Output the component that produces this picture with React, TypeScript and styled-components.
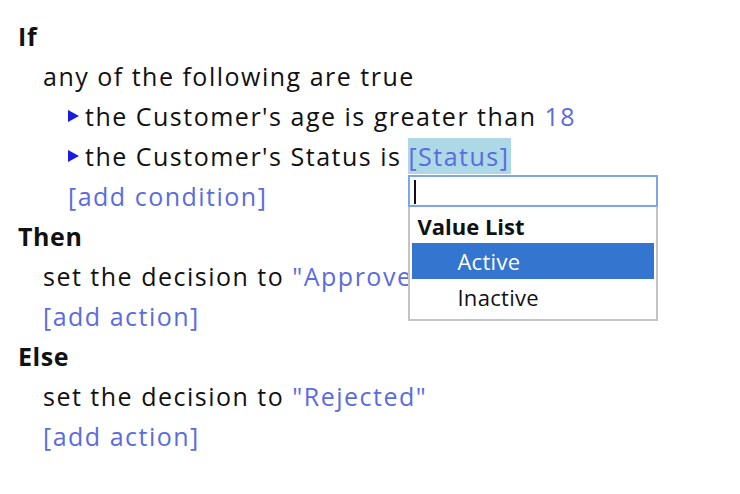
import React from "react";
import styled, { createGlobalStyle } from "styled-components";

const GlobalStyle = createGlobalStyle`
  html, body {
    margin: 0;
    padding: 0;
    background: #ffffff;
  }
  body {
    font-family: "Open Sans", "Noto Sans", sans-serif;
    color: #111111;
  }
`;

const Rule = styled.div`
  padding: 16px 0 0 18px;
  font-size: 25px;
  letter-spacing: 1.5px;
  line-height: 40px;
`;

const Keyword = styled.div`
  font-weight: 700;
  letter-spacing: 0.6px;
`;

const Line = styled.div<{ $level: number }>`
  padding-left: ${(p) => p.$level * 25}px;
  white-space: nowrap;
  display: flex;
  align-items: center;
`;

const Value = styled.span`
  color: #5b6be0;
  white-space: pre;
`;

const Bullet = styled.span`
  display: inline-block;
  width: 0;
  height: 0;
  margin-right: 6px;
  border-top: 6px solid transparent;
  border-bottom: 6px solid transparent;
  border-left: 11px solid #1a1ae6;
`;

const Anchor = styled.span`
  position: relative;
  display: inline-block;
  margin-left: 7px;
`;

const Selected = styled(Value)`
  background: #add8e6;
  padding: 0 2px 0 0;
  display: inline-block;
  line-height: 36px;
`;

const Popup = styled.div`
  position: absolute;
  left: 0;
  top: 39px;
  width: 250px;
  z-index: 2;
  font-size: 22px;
  letter-spacing: 0.3px;
  line-height: 36px;
  color: #111;
`;

const Input = styled.div`
  box-sizing: border-box;
  height: 32px;
  border: 2px solid #7ba7e6;
  background: #fff;
  padding: 3px 0 0 4px;
`;

const Caret = styled.div`
  width: 2px;
  height: 24px;
  background: #111;
`;

const List = styled.div`
  box-sizing: border-box;
  border: 2px solid #c4c4c4;
  border-top: none;
  background: #fff;
  padding: 2px 2px 4px 2px;
`;

const Header = styled.div`
  font-weight: 700;
  padding-left: 5px;
  line-height: 34px;
  letter-spacing: 0;
`;

const Option = styled.div<{ $active?: boolean }>`
  padding-left: 45px;
  background: ${(p) => (p.$active ? "#3475cf" : "transparent")};
  color: ${(p) => (p.$active ? "#ffffff" : "#111")};
`;

export default function App() {
  return (
    <>
      <GlobalStyle />
      <Rule>
        <Keyword>If</Keyword>
        <Line $level={1}>any of the following are true</Line>
        <Line $level={2}>
          <Bullet />
          the Customer's age is greater than <Value> 18</Value>
        </Line>
        <Line $level={2}>
          <Bullet />
          the Customer's Status is
          <Anchor>
            <Selected>[Status]</Selected>
            <Popup>
              <Input>
                <Caret />
              </Input>
              <List>
                <Header>Value List</Header>
                <Option $active>Active</Option>
                <Option>Inactive</Option>
              </List>
            </Popup>
          </Anchor>
        </Line>
        <Line $level={2}>
          <Value>[add condition]</Value>
        </Line>
        <Keyword>Then</Keyword>
        <Line $level={1}>
          set the decision to&nbsp;<Value>"Approved"</Value>
        </Line>
        <Line $level={1}>
          <Value>[add action]</Value>
        </Line>
        <Keyword>Else</Keyword>
        <Line $level={1}>
          set the decision to&nbsp;<Value>"Rejected"</Value>
        </Line>
        <Line $level={1}>
          <Value>[add action]</Value>
        </Line>
      </Rule>
    </>
  );
}
